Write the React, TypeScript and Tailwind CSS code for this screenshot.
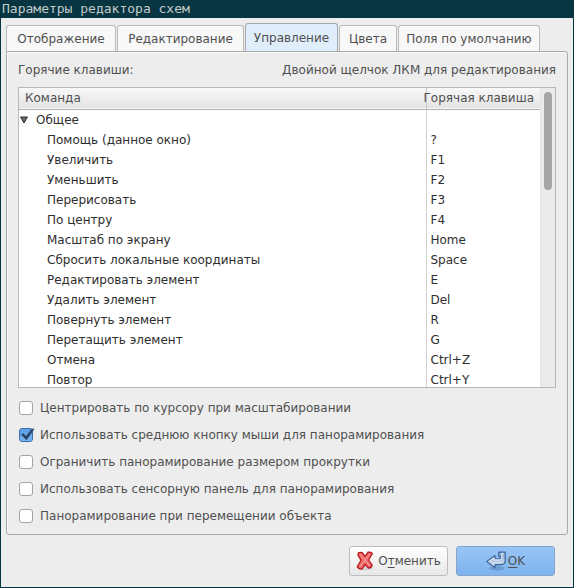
import { useState } from "react";

const tabs = [
  { name: "Отображение", width: "w-[110px]" },
  { name: "Редактирование", width: "w-[127px]" },
  { name: "Управление", width: "w-[93px]" },
  { name: "Цвета", width: "w-[58px]" },
  { name: "Поля по умолчанию", width: "w-[142px]" },
];

const hotkeys = [
  ["Помощь (данное окно)", "?"],
  ["Увеличить", "F1"],
  ["Уменьшить", "F2"],
  ["Перерисовать", "F3"],
  ["По центру", "F4"],
  ["Масштаб по экрану", "Home"],
  ["Сбросить локальные координаты", "Space"],
  ["Редактировать элемент", "E"],
  ["Удалить элемент", "Del"],
  ["Повернуть элемент", "R"],
  ["Перетащить элемент", "G"],
  ["Отмена", "Ctrl+Z"],
  ["Повтор", "Ctrl+Y"],
];

const options = [
  { label: "Центрировать по курсору при масштабировании", on: false },
  { label: "Использовать среднюю кнопку мыши для панорамирования", on: true },
  { label: "Ограничить панорамирование размером прокрутки", on: false },
  { label: "Использовать сенсорную панель для панорамирования", on: false },
  { label: "Панорамирование при перемещении объекта", on: false },
];

function Tabs() {
  const [active, setActive] = useState(2);
  return (
    <div role="tablist" className="flex items-end gap-px">
      {tabs.map(({ name, width }, i) => (
        <button
          key={name}
          role="tab"
          aria-selected={i === active}
          onClick={() => setActive(i)}
          className={`${width} rounded-t-[3px] border border-b-0 text-center whitespace-nowrap ${
            i === active
              ? "h-7 border-[#a5a9ad] bg-[#e0edfb]"
              : "h-[26px] border-[#b9b9b9] bg-[#f8f8f8]"
          }`}
        >
          {name}
        </button>
      ))}
    </div>
  );
}

function HotkeyList() {
  const [open, setOpen] = useState(true);
  return (
    <div className="flex min-h-0 flex-1 overflow-hidden border border-[#b8b8b8] bg-white">
      <div className="min-w-0 flex-1 overflow-hidden">
        <table className="w-full table-fixed border-collapse text-[#2e2e2e]">
          <colgroup>
            <col />
            <col className="w-[114px]" />
          </colgroup>
          <thead>
            <tr className="h-[21px] border-b border-[#b0b0b0] bg-linear-to-b from-[#f8f8f8] to-[#e4e4e4] text-[#505050]">
              <th className="p-0 pl-1.5 text-left font-normal">Команда</th>
              <th className="border-l border-[#c8c8c8] p-0 pr-1.5 font-normal">
                <div className="flex justify-end whitespace-nowrap">Горячая клавиша</div>
              </th>
            </tr>
          </thead>
          <tbody>
            <tr className="h-5">
              <td className="p-0">
                <button
                  aria-expanded={open}
                  onClick={() => setOpen(!open)}
                  className="flex items-center gap-2 pl-px"
                >
                  <svg width="8" height="8" viewBox="0 0 8 8" aria-hidden="true">
                    <path d="M.5 1h7L4 7z" fill="#666" stroke="#333" strokeWidth="1" />
                  </svg>
                  Общее
                </button>
              </td>
              <td className="border-l border-[#d2d2d2] p-0" />
            </tr>
            {open &&
              hotkeys.map(([name, key]) => (
                <tr key={name} className="h-5">
                  <td className="p-0 pl-7">{name}</td>
                  <td className="border-l border-[#d2d2d2] p-0 pl-1">{key}</td>
                </tr>
              ))}
          </tbody>
        </table>
      </div>
      <div className="flex w-[15px] flex-col items-center border-l border-[#e2e2e2] bg-[#ebebeb] py-1">
        <div className="h-[98px] w-2 rounded-full bg-[#a5a5a5]" />
      </div>
    </div>
  );
}

function Option({ label, on }: { label: string; on: boolean }) {
  const [checked, setChecked] = useState(on);
  return (
    <label className="flex h-[27px] items-center gap-[7px]">
      <span className="relative flex size-3.5">
        <input
          type="checkbox"
          checked={checked}
          onChange={() => setChecked(!checked)}
          className="size-3.5 appearance-none rounded-[3px] border border-[#a3a3a3] bg-white checked:border-[#3a6ea8] checked:bg-linear-to-b checked:from-[#5a9fe8] checked:to-[#78b4f4]"
        />
        {checked && (
          <svg
            className="pointer-events-none absolute top-0 left-0 overflow-visible"
            width="16"
            height="14"
            viewBox="0 0 16 14"
            aria-hidden="true"
          >
            <path d="M2 6.4l2.2-1.2L7 8 12.8.8h2.8L7.4 12.2z" fill="#2c4566" />
          </svg>
        )}
      </span>
      {label}
    </label>
  );
}

function CancelIcon() {
  return (
    <svg width="18" height="20" viewBox="0 0 18 20" aria-hidden="true">
      <ellipse cx="9" cy="17" rx="8" ry="2.5" fill="#000" opacity=".1" />
      <path
        d="M2.4 1.8Q4.4 1 6.2 1.6L9.2 5.4 12 1.2Q14.4.8 16.4 2.4L12.6 9 16.2 14.2Q15.2 17 12.4 17.2L9 13.4 6 18.2Q3 18.2 1.2 15.8L5 9.2 2 4.4z"
        fill="#ee6868"
        stroke="#b81418"
        strokeWidth="1.2"
        strokeLinejoin="round"
      />
      <path d="M4.2 3.2l4.6 6L4 15.6M13.8 3L9.2 9.2l4.4 5.6" fill="none" stroke="#f89494" strokeWidth="1.2" />
    </svg>
  );
}

function OkIcon() {
  return (
    <svg width="20" height="20" viewBox="0 0 20 20" aria-hidden="true">
      <defs>
        <linearGradient id="arrow" x1="0" y1="0" x2="0" y2="1">
          <stop offset="0" stopColor="#86a9d2" />
          <stop offset="1" stopColor="#dfe9f5" />
        </linearGradient>
      </defs>
      <ellipse cx="11" cy="17.2" rx="8" ry="2.2" fill="#1c3a60" opacity=".22" />
      <path
        d="M12.8 1.2h6.4v8.4q0 4-4 4H9v3.2L.8 10.6 9 4.6v3.2h4.6q1 0 1-1V5.4h-1.8z"
        fill="url(#arrow)"
        stroke="#3d659c"
        strokeWidth="1.2"
        strokeLinejoin="round"
      />
      <path d="M2.6 10.6L8 6.8v2.1h6.2q1.6 0 1.6-1.8V2.4h2" fill="none" stroke="#eef5fc" strokeWidth=".9" />
    </svg>
  );
}

export default function App() {
  return (
    <div className="flex h-screen flex-col border border-t-0 border-[#073642] bg-[#ededed] font-['DejaVu_Sans',sans-serif] text-xs leading-5 text-[#505050]">
      <header className="h-[18px] bg-[#073642] px-px font-['DejaVu_Sans_Mono',monospace] text-[13px] leading-[18px] text-[#c3cac9]">
        <h1>Параметры редактора схем</h1>
      </header>
      <main className="flex min-h-0 flex-1 flex-col px-[5px] pt-[5px]">
        <Tabs />
        <section className="flex min-h-0 flex-1 flex-col rounded-b-[3px] rounded-tr-[3px] border border-[#a8a8a8] px-[11px] pt-2 pb-[5px] shadow-[inset_1px_1px_0_#fafafa]">
          <div className="flex justify-between pb-[7px] whitespace-nowrap">
            <h2>Горячие клавиши:</h2>
            <p>Двойной щелчок ЛКМ для редактирования</p>
          </div>
          <HotkeyList />
          <div className="flex flex-col pt-1.5 pl-px">
            {options.map((o) => (
              <Option key={o.label} {...o} />
            ))}
          </div>
        </section>
        <footer className="flex justify-end gap-2 px-[13px] py-[11px]">
          <button className="flex h-[30px] w-[99px] items-center justify-center gap-1 rounded-[3px] border border-[#bdbdbd] bg-linear-to-b from-white to-[#e8e8e8]">
            <CancelIcon />
            <span>
              О<u className="underline-offset-2">т</u>менить
            </span>
          </button>
          <button className="flex h-[30px] w-[99px] items-center justify-center gap-0.5 rounded-[3px] border border-[#86a4c8] bg-linear-to-b from-[#98c5f6] to-[#7eb3ef]">
            <OkIcon />
            <span>
              <u className="underline-offset-2">O</u>K
            </span>
          </button>
        </footer>
      </main>
    </div>
  );
}
